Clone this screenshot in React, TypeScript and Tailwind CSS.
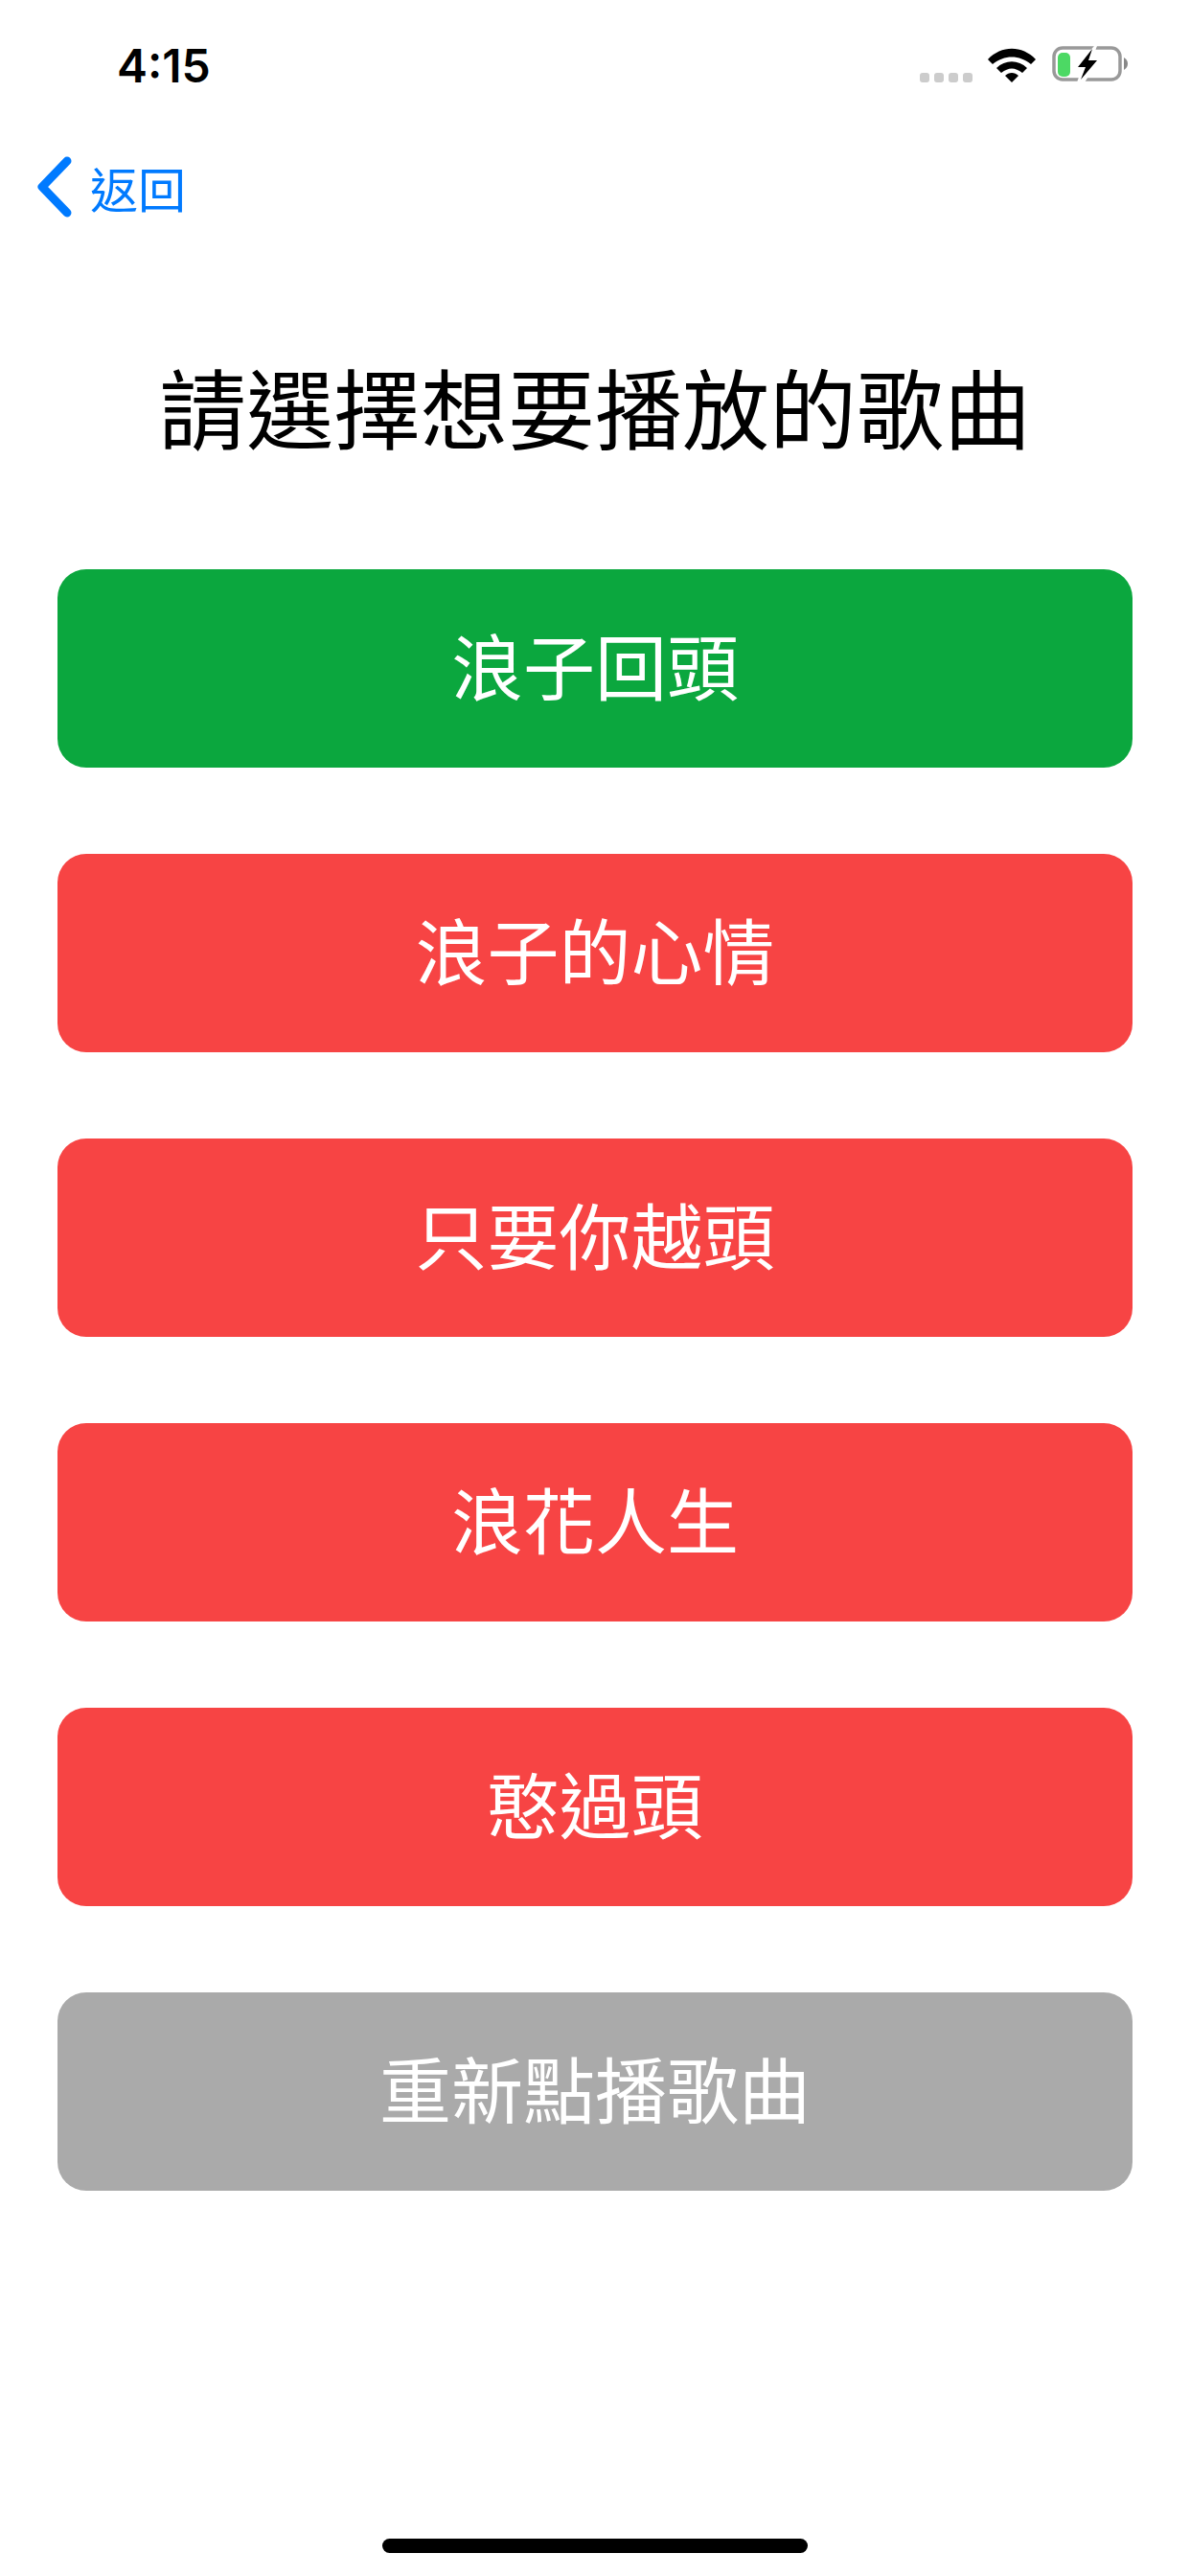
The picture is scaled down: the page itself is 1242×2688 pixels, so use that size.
const songs = [
  { name: '浪子回頭', color: 'bg-[#0ba73e]' },
  { name: '浪子的心情', color: 'bg-[#f74444]' },
  { name: '只要你越頭', color: 'bg-[#f74444]' },
  { name: '浪花人生', color: 'bg-[#f74444]' },
  { name: '憨過頭', color: 'bg-[#f74444]' },
  { name: '重新點播歌曲', color: 'bg-[#aaaaaa]' },
]

function StatusBar() {
  return (
    <div className="flex items-center justify-between h-[134px] pl-[122px] pr-[64px]">
      <span className="mt-[3px] text-[48px] font-semibold leading-none text-black font-['Inter',sans-serif]">
        4:15
      </span>
      <div className="flex items-end gap-[17px]">
        <div className="flex gap-[5px] mr-[-1px]">
          {[0, 1, 2, 3].map(i => (
            <div key={i} className="w-[10px] h-[10px] rounded-[3px] bg-[#cccccc]" />
          ))}
        </div>
        <svg width="50" height="36" viewBox="0 0 50 36">
          <path d="M0 12 C14 -3 36 -3 50 12 L45 17 C33 7 17 7 5 17 Z" fill="#000" />
          <path d="M9 21 C18 12 32 12 41 21 L36 26 C28 20 22 20 14 26 Z" fill="#000" />
          <path d="M18 29 C22 25 28 25 32 29 L25 36 Z" fill="#000" />
        </svg>
        <svg width="80" height="38" viewBox="0 0 80 38">
          <rect x="2" y="2" width="69" height="33" rx="9" fill="none" stroke="#999" strokeWidth="3.5" />
          <rect x="6" y="7" width="13" height="25" rx="5" fill="#4cd964" />
          <path d="M75 12 C78 14 79 16 79 18.5 C79 21 78 23 75 25 Z" fill="#888" />
          <path d="M44 0 L23 24 L31 24 L26 38 L34 38 L50 13 L42 13 L47 0 Z" fill="#fff" />
          <path d="M42 3 L27 22 L35 22 L30 35 L47 15 L38 15 Z" fill="#000" />
        </svg>
      </div>
    </div>
  )
}

export default function App() {
  return (
    <div className="relative flex flex-col h-[2688px] w-[1242px] bg-white font-['Noto_Sans_CJK_TC',sans-serif]">
      <StatusBar />
      <div className="flex items-center gap-[18px] h-[64px] pl-[38px] mt-[29px] text-[#007aff]">
        <svg width="38" height="64" viewBox="0 0 38 64">
          <path d="M32 5 L6 32 L32 59" fill="none" stroke="#007aff" strokeWidth="9" strokeLinecap="round" strokeLinejoin="round" />
        </svg>
        <span className="text-[50px] leading-none">返回</span>
      </div>
      <p className="mt-[141px] text-center text-[91px] leading-[108px] text-black">
        請選擇想要播放的歌曲
      </p>
      <div className="flex flex-col gap-[90px] mt-[118px] px-[60px]">
        {songs.map(song => (
          <button
            key={song.name}
            className={`flex items-center justify-center h-[207px] pb-[8px] rounded-[30px] text-[75px] text-white ${song.color}`}
          >
            {song.name}
          </button>
        ))}
      </div>
      <div className="mt-auto mb-[24px] mx-auto w-[444px] h-[15px] rounded-full bg-black" />
    </div>
  )
}
